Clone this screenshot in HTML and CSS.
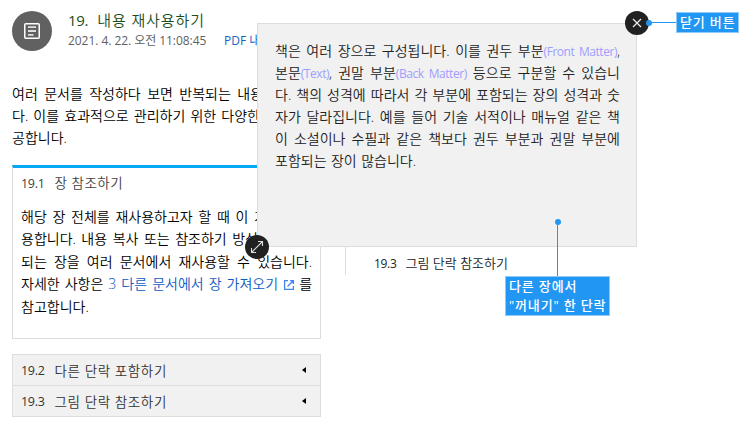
FILE: index.html
```
<!DOCTYPE html>
<html lang="ko">
<head>
    <meta charset="UTF-8">
    <meta name="viewport" content="width=device-width, initial-scale=1.0">
    <title>내용 재사용하기</title>
    <link rel="stylesheet" href="styles.css">
</head>
<body>
    <div class="page">
        <div class="header">
            <div class="doc-icon">
                <svg width="16" height="16" viewBox="0 0 16 16">
                    <rect x="0.75" y="0.75" width="14.5" height="14.5" rx="1" fill="none" stroke="#fff" stroke-width="1.5"/>
                    <path d="M4 4.2h8M4 8h8M4 11.8h5.5" stroke="#ddd" stroke-width="1.8"/>
                </svg>
            </div>
            <div class="header-text">
                <h1><span class="num">19.</span>내용 재사용하기</h1>
                <div class="meta">
                    <span class="date">2021. 4. 22. 오전 11:08:45</span>
                    <a class="pdf">PDF 내</a>
                </div>
            </div>
        </div>

        <div class="columns">
            <div class="main">
                <div class="intro">
                    <div class="line intro-1">여러 문서를 작성하다 보면 반복되는 내용</div>
                    <div class="line intro-2">다. 이를 효과적으로 관리하기 위한 다양한</div>
                    <div class="line intro-3">공합니다.</div>
                </div>

                <div class="section">
                    <h2><span class="num">19.1</span>장 참조하기</h2>
                    <div class="section-body">
                        <div class="line body-1">해당 장 전체를 재사용하고자 할 때 이 기</div>
                        <div class="line body-2">용합니다. 내용 복사 또는 참조하기 방식</div>
                        <div class="line">되는 장을 여러 문서에서 재사용할 수 있습니다.</div>
                        <div class="line">자세한 사항은 <a>3 다른 문서에서 장 가져오기<svg class="external" width="12" height="12" viewBox="0 0 12 12"><path d="M5 1.6H1.6v8.8h8.8V7M7 1.6h3.4V5M10.2 1.8L4.5 7.5" fill="none" stroke="#4285f4" stroke-width="1.3"/></svg></a>를</div>
                        <div class="line body-5">참고합니다.</div>
                    </div>
                </div>

                <div class="accordion">
                    <div class="accordion-item"><span class="num">19.2</span>다른 단락 포함하기<i class="arrow"></i></div>
                    <div class="accordion-item"><span class="num">19.3</span>그림 단락 참조하기<i class="arrow"></i></div>
                </div>
            </div>

            <div class="toc">
                <div class="toc-item"><span class="num">19.3</span>그림 단락 참조하기</div>
            </div>
        </div>

        <div class="popup">
            <div class="line">책은 여러 장으로 구성됩니다. 이를 권두 부분<em>(Front Matter)</em>,</div>
            <div class="line">본문<em>(Text)</em>, 권말 부분<em>(Back Matter)</em> 등으로 구분할 수 있습니</div>
            <div class="line">다. 책의 성격에 따라서 각 부분에 포함되는 장의 성격과 숫</div>
            <div class="line">자가 달라집니다. 예를 들어 기술 서적이나 매뉴얼 같은 책</div>
            <div class="line">이 소설이나 수필과 같은 책보다 권두 부분과 권말 부분에</div>
            <div class="line popup-last">포함되는 장이 많습니다.</div>
            <div class="round close">
                <svg width="24" height="24" viewBox="0 0 24 24"><path d="M8 8l8 8M16 8l-8 8" stroke="#eee" stroke-width="1.2"/></svg>
            </div>
            <div class="round resize">
                <svg width="24" height="24" viewBox="0 0 24 24"><path d="M6.5 17.5l11-11M13 6.5h4.5V11M6.5 13v4.5H11" fill="none" stroke="#ddd" stroke-width="1.1"/></svg>
            </div>
        </div>

        <div class="callout callout-close">
            <span class="dot"></span><span class="lead"></span>
            <div class="label">닫기 버튼</div>
        </div>
        <div class="callout callout-text">
            <span class="dot"></span><span class="lead"></span>
            <div class="label">다른 장에서<br>"꺼내기" 한 단락</div>
        </div>
    </div>
</body>
</html>
```
FILE: styles.css
```
* {
    margin: 0;
    padding: 0;
    box-sizing: border-box;
}

body {
    font-family: 'Open Sans', 'Noto Sans CJK KR', sans-serif;
    font-size: 14px;
    font-weight: 350;
    color: #000;
    background: #fff;
}

.page {
    position: relative;
    width: 739px;
    height: 432px;
    overflow: hidden;
    padding: 10px 12px;
}

.header {
    display: flex;
    gap: 16px;
    height: 73px;
}

.doc-icon {
    display: flex;
    align-items: center;
    justify-content: center;
    width: 40px;
    height: 40px;
    margin-top: 1px;
    border-radius: 50%;
    background: #616161;
}

h1 {
    font-size: 15px;
    font-weight: 350;
    line-height: 21px;
    letter-spacing: 0.9px;
    color: #1b4d1b;
}

h1 .num {
    margin-right: 9px;
    letter-spacing: -0.3px;
}

.meta {
    display: flex;
    gap: 17px;
    font-size: 12px;
    font-weight: 400;
    line-height: 20px;
    color: #616161;
    white-space: nowrap;
}

.date {
    width: 139px;
    letter-spacing: -0.05px;
}

.pdf {
    color: #1565c0;
}

.columns {
    display: flex;
    gap: 24px;
}

.main {
    width: 309px;
}

.line {
    height: 22px;
    line-height: 22px;
    white-space: nowrap;
    text-align: justify;
    text-align-last: justify;
}

.intro {
    height: 82px;
}

.intro-1 {
    width: 251px;
}

.intro-2 {
    width: 248px;
}

.intro-3 {
    width: 55px;
}

.section {
    height: 174px;
    padding: 0 8px;
    border: 1px solid #ddd;
    border-top: 3px solid #03a9f4;
}

h2 {
    padding: 5px 0;
    font-size: 13.5px;
    font-weight: 350;
    line-height: 20px;
    letter-spacing: 0.5px;
    color: #424242;
}

.num {
    margin-right: 10px;
    font-size: 12.5px;
    font-weight: 400;
    letter-spacing: -0.3px;
}

h1 .num {
    font-size: 15px;
}

.section-body {
    padding-top: 7px;
}

.section-body .line {
    height: 22.4px;
}

.body-1 {
    width: 246px;
}

.body-2 {
    width: 237px;
}

.body-5 {
    width: 68px;
}

.section a {
    color: #0d5bc6;
}

.external {
    margin: 0 4px 0 5px;
    vertical-align: -2px;
}

.accordion {
    margin-top: 15px;
    border: 1px solid #ddd;
    background: #f1f1f1;
}

.accordion-item {
    display: flex;
    align-items: center;
    height: 30px;
    padding: 0 14px 0 8px;
    font-size: 13.5px;
    letter-spacing: 0.6px;
    color: #333;
}

.accordion-item + .accordion-item {
    height: 31px;
    border-top: 1px solid #ddd;
}

.arrow {
    margin-left: auto;
    border: 3px solid transparent;
    border-right: 4px solid #000;
    border-left: 0;
}

.toc {
    height: 192px;
    padding: 169px 0 0 28px;
    border-left: 1px solid #ddd;
    font-size: 13px;
    line-height: 22px;
    color: #222;
}

.toc .num {
    margin-right: 9px;
    font-size: 12px;
}

.popup {
    position: absolute;
    left: 257px;
    top: 23px;
    width: 380px;
    height: 224px;
    padding: 16px 16px 0 17px;
    border: 1px solid #ddd;
    background: #f1f1f1;
    color: #222;
}

.popup em {
    font-size: 12px;
    font-weight: 400;
    font-style: normal;
    letter-spacing: -0.45px;
    color: #9e9eff;
}

.popup-last {
    width: 141px;
}

.round {
    position: absolute;
    width: 24px;
    height: 24px;
    border-radius: 50%;
    background: #212121;
}

.close {
    top: -13px;
    right: -13px;
}

.resize {
    bottom: -13px;
    left: -13px;
}

.callout {
    position: absolute;
    display: flex;
    align-items: center;
}

.callout-close {
    left: 646px;
    top: 12px;
}

.callout-text {
    left: 505px;
    top: 219px;
    flex-direction: column;
}

.dot {
    width: 6px;
    height: 6px;
    border-radius: 50%;
    background: #2196f3;
}

.lead {
    width: 24px;
    height: 1px;
    background: #2196f3;
}

.callout-text .lead {
    width: 1px;
    height: 51px;
}

.label {
    padding: 0 3px;
    border: 1px solid #90caf9;
    background: #2196f3;
    color: #fff;
    font-size: 13px;
    line-height: 19px;
    font-weight: 500;
    letter-spacing: 0.85px;
    white-space: nowrap;
}
```
